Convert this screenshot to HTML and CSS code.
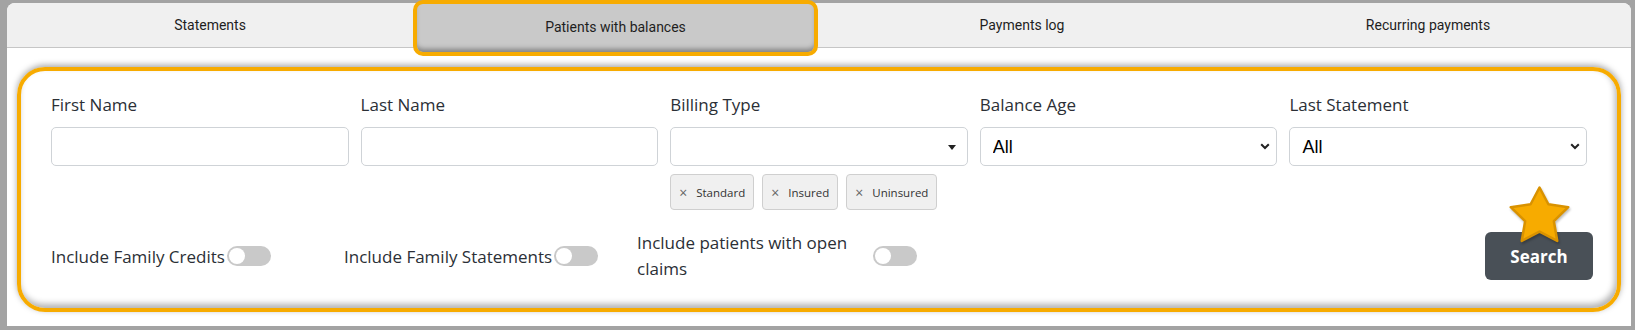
FILE: index.html
```html
<!DOCTYPE html>
<html lang="en">
<head>
  <meta charset="UTF-8">
  <title>Patients with balances</title>
  <link rel="stylesheet" href="styles.css">
</head>
<body>
  <div class="frame">
    <div class="tabs">
      <div class="tab">Statements</div>
      <div class="tab active">Patients with balances</div>
      <div class="tab">Payments log</div>
      <div class="tab">Recurring payments</div>
    </div>

    <div class="filters">
      <div class="fields">
        <div class="field">
          <label>First Name</label>
          <input type="text" class="box">
        </div>
        <div class="field">
          <label>Last Name</label>
          <input type="text" class="box">
        </div>
        <div class="field">
          <label>Billing Type</label>
          <div class="box multi">
            <span class="caret"></span>
          </div>
          <div class="tags">
            <span class="tag"><span class="x">&times;</span>Standard</span>
            <span class="tag"><span class="x">&times;</span>Insured</span>
            <span class="tag"><span class="x">&times;</span>Uninsured</span>
          </div>
        </div>
        <div class="field">
          <label>Balance Age</label>
          <div class="select-wrap">
            <select class="box"><option>All</option></select>
            <svg class="chev" width="10" height="7" viewBox="0 0 10 7"><path d="M1.2 1.2 L5 5 L8.8 1.2" fill="none" stroke="#222" stroke-width="2"/></svg>
          </div>
        </div>
        <div class="field">
          <label>Last Statement</label>
          <div class="select-wrap">
            <select class="box"><option>All</option></select>
            <svg class="chev" width="10" height="7" viewBox="0 0 10 7"><path d="M1.2 1.2 L5 5 L8.8 1.2" fill="none" stroke="#222" stroke-width="2"/></svg>
          </div>
        </div>
      </div>

      <div class="options">
        <div class="toggle">
          <span>Include Family Credits</span>
          <span class="switch"></span>
        </div>
        <div class="toggle">
          <span>Include Family Statements</span>
          <span class="switch"></span>
        </div>
        <div class="toggle wide">
          <span class="wrap">Include patients with open claims</span>
          <span class="switch"></span>
        </div>
        <div class="search-wrap">
          <button class="search">Search</button>
          <svg class="star" width="63" height="63" viewBox="0 0 100 100">
            <path d="M50 4 L64.1 30.6 L95.6 35.2 L72.8 57.4 L78.2 88.8 L50 74 L21.8 88.8 L27.2 57.4 L4.4 35.2 L35.9 30.6 Z" fill="#f7ab00" stroke="#d99200" stroke-width="4" stroke-linejoin="round"/>
          </svg>
        </div>
      </div>
    </div>
  </div>
</body>
</html>
```

FILE: styles.css
```css
body {
  margin: 0;
  background-color: #a3a3a3;
  font-family: "Open Sans", "Noto Sans", sans-serif;
  color: #212529;
}

.frame {
  margin: 3px 4px 0 7px;
  height: 323px;
  background-color: #fff;
  border-radius: 8px 8px 0 0;
  box-sizing: border-box;
  padding-bottom: 14px;
  display: flex;
  flex-direction: column;
}

.tabs {
  display: grid;
  grid-template-columns: repeat(4, 1fr);
  height: 44px;
  background-color: #f0f0f0;
  border-bottom: 1px solid #c6c6c6;
  border-radius: 8px 8px 0 0;
}
.tab {
  display: flex;
  align-items: center;
  justify-content: center;
  font-family: "Liberation Sans Narrow", "Roboto", sans-serif;
  font-size: 14px;
  color: #1e1e1e;
}
.tab.active {
  position: relative;
  background-color: #c9c9c9;
  margin: -3px 1px -9px 0;
  padding-bottom: 3px;
  border: 4px solid #f7ab00;
  border-radius: 10px;
  box-shadow: inset 0 -5px 5px -2px rgba(0, 0, 0, 0.35);
}

.filters {
  margin: 19px 10px 0 10px;
  flex: 1;
  border: 4px solid #f7ab00;
  border-radius: 28px;
  padding: 22px 30px 0 30px;
  box-shadow: 0 -2px 6px rgba(0, 0, 0, 0.35), inset -2px -4px 6px rgba(0, 0, 0, 0.3);
}

.fields {
  display: grid;
  grid-template-columns: repeat(5, 1fr);
  gap: 12px;
}
.field label {
  display: block;
  font-size: 17px;
  line-height: 24px;
  margin-bottom: 10px;
  color: #2b2f36;
}
.box {
  display: block;
  box-sizing: border-box;
  width: 100%;
  height: 39px;
  border: 1px solid #cfd3d7;
  border-radius: 5px;
  background-color: #fff;
  margin: 0;
  font-family: "Liberation Sans", Arial, sans-serif;
  font-size: 18px;
  color: #000;
}
.multi {
  position: relative;
}
.caret {
  position: absolute;
  right: 11px;
  top: 17px;
  border-left: 4px solid transparent;
  border-right: 4px solid transparent;
  border-top: 5px solid #222;
}
.select-wrap {
  position: relative;
}
select.box {
  appearance: none;
  -webkit-appearance: none;
  padding: 0 12px;
}
.chev {
  position: absolute;
  right: 7px;
  top: 16px;
}

.tags {
  display: flex;
  gap: 8px;
  margin-top: 8px;
}
.tag {
  display: flex;
  align-items: center;
  height: 36px;
  box-sizing: border-box;
  padding: 0 8px 0 8px;
  border: 1px solid #cfcfcf;
  border-radius: 4px;
  background-color: #f0f0f0;
  font-size: 11.5px;
  color: #333;
}
.tag .x {
  color: #666;
  font-size: 14px;
  margin-right: 9px;
}

.options {
  display: flex;
  align-items: center;
  margin-top: 20px;
}
.toggle {
  display: flex;
  align-items: center;
  gap: 2px;
  width: 293px;
  font-size: 17px;
  color: #2b2f36;
}
.toggle.wide {
  width: auto;
  gap: 10px;
}
.toggle .wrap {
  width: 226px;
  line-height: 26px;
}
.switch {
  position: relative;
  width: 44px;
  height: 20px;
  border-radius: 10px;
  background-color: #c9c9c9;
  flex-shrink: 0;
}
.switch::after {
  content: "";
  position: absolute;
  left: 2px;
  top: 2px;
  width: 16px;
  height: 16px;
  border-radius: 50%;
  background-color: #fff;
}

.search-wrap {
  position: relative;
  margin-left: auto;
  margin-right: -6px;
}
.search {
  width: 108px;
  height: 48px;
  border: none;
  border-radius: 6px;
  background-color: #495057;
  color: #fff;
  font-family: "Open Sans", sans-serif;
  font-weight: bold;
  font-size: 17px;
  padding: 0;
}
.star {
  position: absolute;
  left: 23px;
  top: -47px;
  filter: drop-shadow(1px 2px 1px rgba(0, 0, 0, 0.25));
}
```
